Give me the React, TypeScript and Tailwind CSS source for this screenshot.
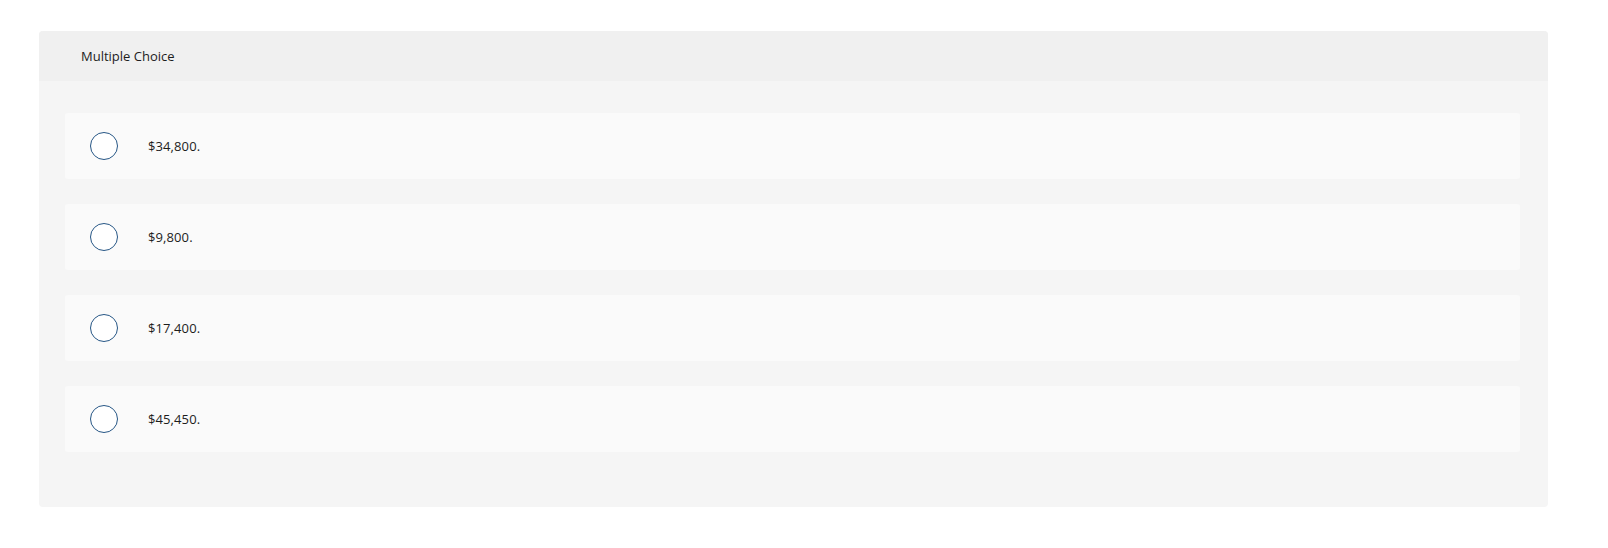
export default function App() {
  const options = ["$34,800.", "$9,800.", "$17,400.", "$45,450."];
  return (
    <div className="w-[1608px] h-[548px] bg-white pt-[31px] pl-[39px]" style={{ fontFamily: "'Open Sans', Lato, sans-serif" }}>
      <div className="w-[1509px] rounded-[4px] overflow-hidden bg-[#f5f5f5]">
        <div className="h-[50px] bg-[#f0f0f0] flex items-center pl-[42px] pt-[2px] text-[13px] text-[#1d1d1d]">
          Multiple Choice
        </div>
        <div className="pt-[32px] pb-[55px] pl-[26px] pr-[28px] flex flex-col gap-[25px]">
          {options.map((o) => (
            <div key={o} className="h-[66px] bg-[#fafafa] rounded-[3px] flex items-center pl-[25px]">
              <div className="w-[28px] h-[28px] rounded-full border-[1.75px] border-[#265685] bg-white shrink-0" />
              <span className="ml-[30px] pt-[2px] text-[13px] tracking-[0.1px] text-[#1d1d1d]">{o}</span>
            </div>
          ))}
        </div>
      </div>
    </div>
  );
}
